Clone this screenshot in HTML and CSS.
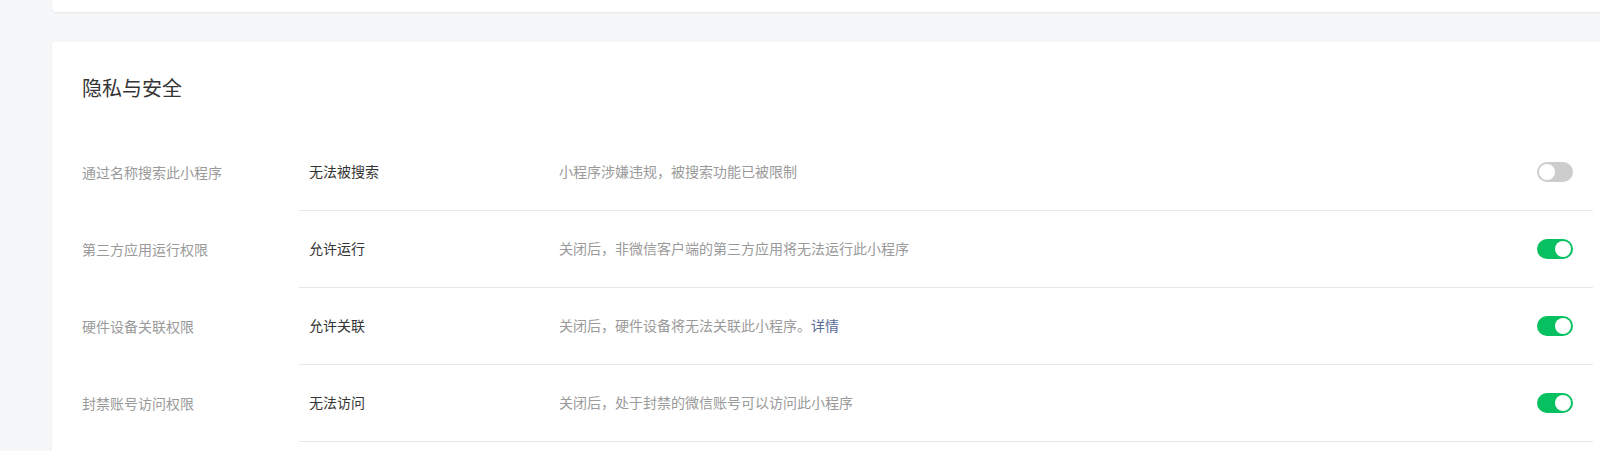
FILE: index.html
```html
<!DOCTYPE html>
<html lang="zh-CN">
<head>
<meta charset="utf-8">
<title>隐私与安全</title>
<link rel="stylesheet" href="styles.css">
</head>
<body>
<div class="main">
  <div class="card card-prev"></div>
  <div class="card">
    <h2 class="card-title">隐私与安全</h2>
    <div class="setting-list">
      <div class="setting-row">
        <div class="setting-label">通过名称搜索此小程序</div>
        <div class="setting-body">
          <div class="setting-value">无法被搜索</div>
          <div class="setting-desc">小程序涉嫌违规，被搜索功能已被限制</div>
          <span class="switch"></span>
        </div>
      </div>
      <div class="setting-row">
        <div class="setting-label">第三方应用运行权限</div>
        <div class="setting-body">
          <div class="setting-value">允许运行</div>
          <div class="setting-desc">关闭后，非微信客户端的第三方应用将无法运行此小程序</div>
          <span class="switch switch-on"></span>
        </div>
      </div>
      <div class="setting-row">
        <div class="setting-label">硬件设备关联权限</div>
        <div class="setting-body">
          <div class="setting-value">允许关联</div>
          <div class="setting-desc">关闭后，硬件设备将无法关联此小程序。<a class="link" href="#">详情</a></div>
          <span class="switch switch-on"></span>
        </div>
      </div>
      <div class="setting-row">
        <div class="setting-label">封禁账号访问权限</div>
        <div class="setting-body">
          <div class="setting-value">无法访问</div>
          <div class="setting-desc">关闭后，处于封禁的微信账号可以访问此小程序</div>
          <span class="switch switch-on"></span>
        </div>
      </div>
    </div>
  </div>
</div>
</body>
</html>
```
FILE: styles.css
```css
html, body {
  margin: 0;
  padding: 0;
}
body {
  background: #f6f7f9;
  font-family: "Noto Sans CJK SC", "Noto Sans", sans-serif;
  overflow: hidden;
  width: 1600px;
  height: 451px;
}
.main {
  margin-left: 52px;
  width: 1571px;
  display: flex;
  flex-direction: column;
  gap: 30px;
}
.card {
  background: #fff;
  border-radius: 4px;
  box-shadow: 0 1px 2px rgba(0, 0, 0, 0.08);
  padding: 32px 30px 40px;
}
.card-prev {
  height: 12px;
  padding: 0;
  border-radius: 0 0 4px 4px;
}
.card-title {
  margin: 0 0 32px;
  font-size: 20px;
  line-height: 28px;
  font-weight: normal;
  color: #353535;
}
.setting-row {
  display: flex;
  align-items: stretch;
}
.setting-label {
  width: 217px;
  flex: none;
  display: flex;
  align-items: center;
  padding-bottom: 2px;
  font-size: 14px;
  line-height: 20px;
  color: #9a9a9a;
}
.setting-body {
  flex: 1;
  display: flex;
  align-items: center;
  height: 76px;
  padding: 0 20px 0 10px;
  border-bottom: 1px solid #e7e7eb;
  font-size: 14px;
  line-height: 20px;
}
.setting-value {
  width: 250px;
  flex: none;
  margin-bottom: 2px;
  color: #353535;
}
.setting-desc {
  flex: 1;
  margin-bottom: 2px;
  color: #9a9a9a;
}
.link {
  color: #576b95;
  text-decoration: none;
}
.switch {
  position: relative;
  flex: none;
  width: 36px;
  height: 20px;
  border-radius: 10px;
  background: #cdcdcd;
}
.switch::after {
  content: "";
  position: absolute;
  top: 2px;
  left: 2px;
  width: 16px;
  height: 16px;
  border-radius: 50%;
  background: #fff;
}
.switch-on {
  background: #07c160;
}
.switch-on::after {
  left: 18px;
}
```
